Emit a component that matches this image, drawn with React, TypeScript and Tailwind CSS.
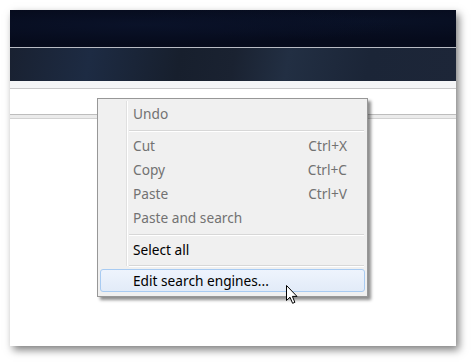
import React from 'react';

type Item = { label: string; shortcut?: string; disabled?: boolean };

const editGroup: Item[] = [
  { label: 'Cut', shortcut: 'Ctrl+X', disabled: true },
  { label: 'Copy', shortcut: 'Ctrl+C', disabled: true },
  { label: 'Paste', shortcut: 'Ctrl+V', disabled: true },
  { label: 'Paste and search', disabled: true },
];

function MenuRow({ item, h = 'h-[24px]' }: { item: Item; h?: string }) {
  return (
    <div
      className={`flex items-center justify-between pl-[33px] pr-[18px] ${h} ${
        item.disabled ? 'text-[#727272]' : 'text-black'
      }`}
    >
      <span>{item.label}</span>
      {item.shortcut && <span>{item.shortcut}</span>}
    </div>
  );
}

function Separator() {
  return (
    <div className="h-[8px] pt-[4px] pl-[29px] pr-[1px]">
      <div className="h-[2px] border-t border-[#d7d7d7] border-b border-b-white" />
    </div>
  );
}

function Cursor() {
  return (
    <svg
      width="13"
      height="20"
      viewBox="0 0 13 20"
      className="absolute left-[286px] top-[285px]"
    >
      <path
        d="M0.5 0.5 L0.5 15.5 L4 12.2 L6.6 18.3 L8.9 17.3 L6.4 11.4 L11 11.4 Z"
        fill="#ffffff"
        stroke="#000000"
        strokeWidth="1"
        strokeLinejoin="miter"
      />
    </svg>
  );
}

export default function App() {
  return (
    <div className="relative w-[474px] h-[364px] bg-white overflow-hidden font-['Noto_Sans','Open_Sans',sans-serif]">
      <div className="ml-[10px] mt-[10px] w-[446px] h-[336px] bg-white flex flex-col shadow-[3px_4px_8px_rgba(0,0,0,0.5)]">
        <div className="h-[37px] bg-[#060b1c] bg-[radial-gradient(ellipse_at_30%_40%,#0a1229_0%,transparent_60%),radial-gradient(ellipse_at_80%_30%,#091126_0%,transparent_50%)]" />
        <div className="h-[1px] bg-[#b9bcc4]" />
        <div className="h-[33px] bg-[#1a2334] bg-[linear-gradient(100deg,#192131_0%,#1d2b43_18%,#171f2d_38%,#1a2231_50%,#222f43_62%,#1b2537_80%,#1d2638_100%)]" />
        <div className="h-[7px] bg-[#f4f5f7]" />
        <div className="h-[1px] bg-[#c8c8ca]" />
        <div className="h-[25px]" />
        <div className="h-[1px] bg-[#bdbdbd]" />
        <div className="h-[3px] bg-[#ebebeb]" />
        <div className="h-[1px] bg-[#d2d2d2]" />
        <div className="flex-1" />
      </div>

      <div className="absolute left-[97px] top-[98px] w-[271px] border border-[#979797] bg-[#f0f0f0] px-[2px] pt-[3px] pb-[4px] text-[13.7px] leading-none shadow-[3px_3px_3px_rgba(0,0,0,0.45)]">
        <div className="absolute left-[28px] top-[2px] bottom-[30px] w-[2px] border-l border-[#e0e0e0] border-r border-r-white" />
        <div className="relative">
          <MenuRow item={{ label: 'Undo', disabled: true }} />
          <Separator />
          {editGroup.map(item => (
            <MenuRow key={item.label} item={item} />
          ))}
          <Separator />
          <MenuRow item={{ label: 'Select all' }} h="h-[23px]" />
          <Separator />
          <div className="flex items-center h-[23px] pl-[32px] rounded-[3px] border border-[#a8cbf2] bg-[linear-gradient(#eef4fd,#e2ebf8)] text-black">
            Edit search engines...
          </div>
        </div>
      </div>

      <Cursor />
    </div>
  );
}
